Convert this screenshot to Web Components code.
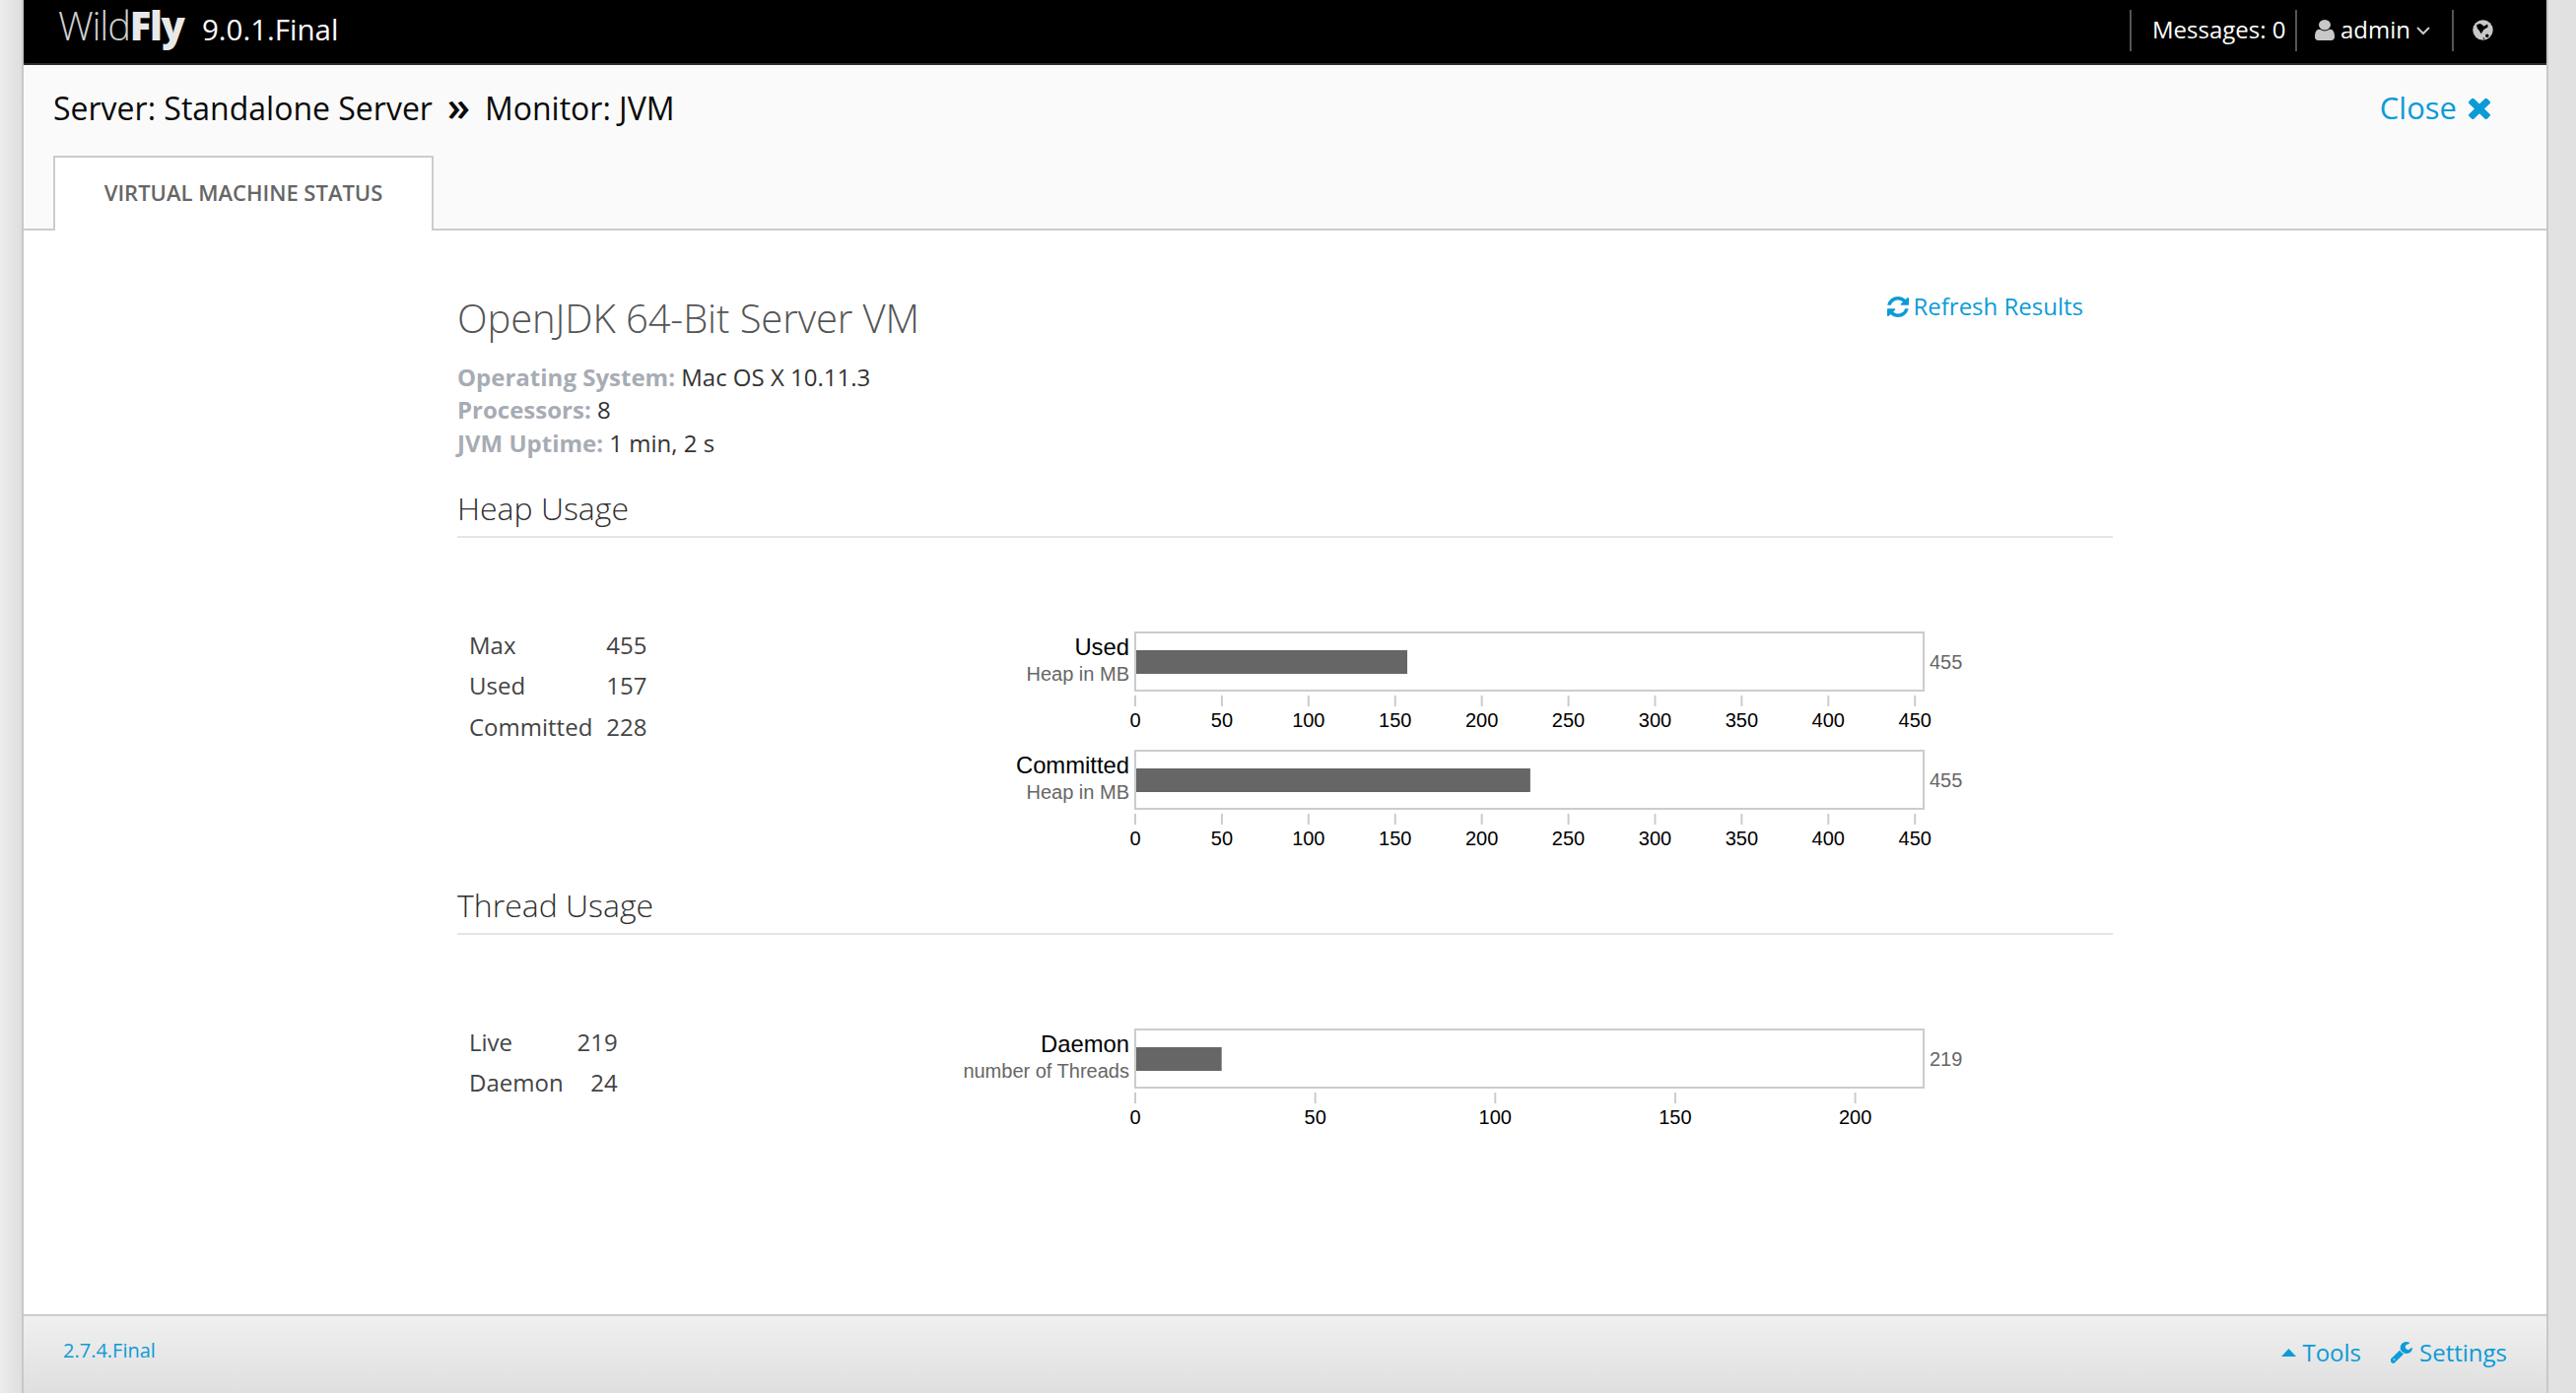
<!DOCTYPE html>
<html><head><meta charset="utf-8"><style>
html,body{margin:0;padding:0;height:100%}
body{font-family:"Open Sans",sans-serif;background:#e2e2e2}
</style></head><body>
<wf-app>
  <wf-topbar version="9.0.1.Final"></wf-topbar>
  <wf-subheader></wf-subheader>
  <wf-status></wf-status>
  <wf-footer></wf-footer>
</wf-app>
<script>
const FA={
times:["110 188 1188 1232","M1298 1188q0 40-28 68l-136 136q-28 28-68 28t-68-28l-294-294-294 294q-28 28-68 28t-68-28l-136-136q-28-28-28-68t28-68l294-294-294-294q-28-28-28-68t28-68l136-136q28-28 68-28t68 28l294 294 294-294q28-28 68-28t68 28l136 136q28 28 28 68t-28 68l-294 294 294 294q28 28 28 68z"],
user:["256 128 1280 1536","M1536 1399q0 109-62.5 187t-150.5 78h-854q-88 0-150.5-78t-62.5-187q0-85 8.5-160.5t31.5-152 58.5-131 94-89 134.5-34.5q131 128 313 128t313-128q76 0 134.5 34.5t94 89 58.5 131 31.5 152 8.5 160.5zm-256-887q0 159-112.5 271.5t-271.5 112.5-271.5-112.5-112.5-271.5 112.5-271.5 271.5-112.5 271.5 112.5 112.5 271.5z"],
refresh:["128 128 1536 1536","M1639 1056q0 5-1 7-64 268-268 434.5t-478 166.5q-146 0-282.5-55t-243.5-157l-129 129q-19 19-45 19t-45-19-19-45v-448q0-26 19-45t45-19h448q26 0 45 19t19 45-19 45l-137 137q71 66 161 102t187 36q134 0 250-65t186-179q11-17 53-117 8-23 30-23h192q13 0 22.5 9.5t9.5 22.5zm25-800v448q0 26-19 45t-45 19h-448q-26 0-45-19t-19-45 19-45l138-138q-148-137-349-137-134 0-250 65t-186 179q-11 17-53 117-8 23-30 23h-199q-13 0-22.5-9.5t-9.5-22.5v-7q65-268 270-434.5t480-166.5q146 0 284 55.5t245 156.5l130-129q19-19 45-19t45 19 19 45z"],
wrench:["136 128 1590 1643","M448 1472q0-26-19-45t-45-19-45 19-19 45 19 45 45 19 45-19 19-45zm644-420l-682 682q-37 37-90 37-52 0-91-37l-106-108q-38-36-38-90 0-53 38-91l681-681q39 98 114.5 173.5t173.5 114.5zm634-435q0 39-23 106-47 134-164.5 217.5t-258.5 83.5q-185 0-316.5-131.5t-131.5-316.5 131.5-316.5 316.5-131.5q58 0 121.5 16.5t107.5 46.5q16 11 16 28t-16 28l-293 169v224l193 107q5-3 79-48.5t135.5-81 70.5-35.5q15 0 23.5 10t8.5 25z"]
};
const icon=(n,w,h,c,extra='')=>`<svg width="${w}" height="${h}" viewBox="${FA[n][0]}" preserveAspectRatio="none" fill="${c}" style="display:block;flex:none;${extra}"><path d="${FA[n][1]}"/></svg>`;

function def(name,css,html){
  customElements.define(name,class extends HTMLElement{
    connectedCallback(){
      if(this.shadowRoot)return;
      const r=this.attachShadow({mode:'open'});
      r.innerHTML=`<style>${css}</style>`+(typeof html==='function'?html(this):html);
    }
  });
}

def('wf-app',`
:host{display:flex;flex-direction:column;box-sizing:border-box;height:1414px;width:2614px;padding:0 30px 0 24px;
 background:linear-gradient(90deg,#ececec 0,#dedede 22px,#c8c8c8 22px,#c8c8c8 24px,#c8c8c8 2586px,#e2e2e2 2586px,#e0e0e0 100%)}
`,`<slot></slot>`);

def('wf-topbar',`
:host{display:flex;align-items:center;height:66px;box-sizing:border-box;background:#000;border-bottom:2px solid #2b2b2b;color:#fff;padding:0 0 0 35px}
.logo{font-family:"Open Sans";font-size:40px;line-height:52px;padding-bottom:12px;color:#cfcfcf;font-weight:300;letter-spacing:-1.2px;width:146px;white-space:nowrap}
.logo b{font-family:"Open Sans";font-weight:800;color:#e8e8e8;letter-spacing:-1.4px}
.ver{font-size:29.5px;line-height:59px;padding-bottom:5px}
.right{margin-left:auto;display:flex;align-items:center;height:42px;font-size:24px;margin-bottom:2px}
.item{display:flex;align-items:center;height:42px;box-sizing:border-box;border-left:2px solid #555;padding-bottom:4px}
.msg{padding-left:21px;width:168px}
.adm{padding-left:18px;width:159px;gap:6px}
.glob{padding-left:19px;width:96px;padding-bottom:1px}
`,`<div class="logo">Wild<b>Fly</b></div><div class="ver">9.0.1.Final</div>
<div class="right">
<div class="item msg">Messages: 0</div>
<div class="item adm">${icon('user',20,21,'#c8c8c8','margin-top:3px')}<span>admin</span><svg width="14" height="9" viewBox="0 0 14 9" fill="none" stroke="#c8c8c8" stroke-width="2" style="margin-top:4px"><path d="M1 1l6 6 6-6"/></svg></div>
<div class="item glob"><svg width="21" height="21" viewBox="0 0 21 21"><circle cx="10.500" cy="10.500" r="10.200" fill="#c8c8c8"/><path d="M4 5.200L7.500 4l2.300 1 1.500 1.700L15.200 4.500l.5 3-4.200 2.400-2.800 4.300L6.800 11 4.800 8.800z" fill="#000"/><circle cx="14.800" cy="16.300" r="1.700" fill="#000"/><circle cx="11.500" cy="19" r=".8" fill="#000"/></svg></div>
</div>`);

def('wf-subheader',`
:host{display:block;height:168px;box-sizing:border-box;background:#fafafa;border-bottom:2px solid #ccc;padding:0 0 0 30px}
.row{display:flex;align-items:flex-start;height:92px;box-sizing:border-box;padding:20px 57px 0 0}
.crumb{font-size:32px;line-height:44px;color:#0a0a0a;display:flex;white-space:nowrap;margin-top:2px}
.sep{width:53px;text-align:center;font-size:42px;line-height:38px;font-weight:600}
.close{margin-left:auto;display:flex;align-items:center;gap:12px;font-size:31px;line-height:44px;color:#0b9bd7;margin-top:1px}
.tabs{display:flex}
wf-tab{margin-bottom:-2px}
`,`<div class="row"><div class="crumb"><span>Server: Standalone Server</span><span class="sep">»</span><span>Monitor: JVM</span></div>
<div class="close"><span>Close</span>${icon('times',22,22,'#0b9bd7','margin-top:2px')}</div></div>
<div class="tabs"><wf-tab>Virtual Machine Status</wf-tab></div>`);

def('wf-tab',`
:host{display:block;box-sizing:border-box;width:386px;height:76px;background:#fff;border:2px solid #ccc;border-bottom:0;color:#666;font-size:22px;font-weight:600;text-transform:uppercase;text-align:center;line-height:70px;white-space:nowrap}
`,`<slot></slot>`);

def('wf-status',`
:host{display:block;flex:1;background:#fff;box-sizing:border-box;padding:64px 0 0 440px;min-height:0}
.wrap{width:1680px}
.head{display:flex;justify-content:space-between}
h1{margin:0;font-size:40px;font-weight:300;line-height:50px;color:#555;letter-spacing:-.1px}
.refresh{display:flex;align-items:center;gap:4px;color:#0b9bd7;font-size:24px;line-height:34px;height:34px;margin:-4px 30px 0 0}
dl{margin:18px 0 0;font-size:24px;line-height:33.33px;color:#333}
dl div{display:block;white-space:nowrap}
dt{display:inline;font-weight:700;color:#a7acb4}
dd{display:inline;margin:0}
`,`<div class="wrap">
<div class="head"><h1>OpenJDK 64-Bit Server VM</h1><div class="refresh">${icon('refresh',22,21,'#0b9bd7')}<span>Refresh Results</span></div></div>
<dl><div><dt>Operating System:</dt> <dd>Mac OS X 10.11.3</dd></div><div><dt>Processors:</dt> <dd>8</dd></div><div><dt>JVM Uptime:</dt> <dd>1 min, 2 s</dd></div></dl>
<wf-section heading="Heap Usage" style="margin-top:30px">
  <wf-metrics slot="metrics" data='[["Max",455],["Used",157],["Committed",228]]'></wf-metrics>
  <wf-bullet title-text="Used" sub="Heap in MB" value="157" max="455" step="50" ticks="10"></wf-bullet>
  <wf-bullet title-text="Committed" sub="Heap in MB" value="228" max="455" step="50" ticks="10"></wf-bullet>
</wf-section>
<wf-section heading="Thread Usage" style="margin-top:37px">
  <wf-metrics slot="metrics" data='[["Live",219],["Daemon",24]]'></wf-metrics>
  <wf-bullet title-text="Daemon" sub="number of Threads" value="24" max="219" step="50" ticks="5"></wf-bullet>
</wf-section>
</div>`);

def('wf-section',`
:host{display:block}
h2{margin:0;font-size:32px;line-height:40px;font-weight:300;color:#2e2e2e;padding-bottom:8px;border-bottom:2px solid #e5e5e5}
.body{display:grid;grid-template-columns:476px 1fr;padding-top:76px}
.charts{display:flex;flex-direction:column}
.m{padding-top:12px}
`,(h)=>`<h2>${h.getAttribute('heading')}</h2><div class="body"><div class="m"><slot name="metrics"></slot></div><div class="charts"><slot></slot></div></div>`);

def('wf-metrics',`
:host{display:grid;grid-template-columns:auto auto;justify-content:start;column-gap:14px;padding-left:12px;font-size:24px;line-height:41.5px;color:#444}
.v{text-align:right}
`,(h)=>JSON.parse(h.getAttribute('data')).map(([k,v])=>`<span>${k}</span><span class="v">${v}</span>`).join(''));

def('wf-bullet',`
:host{display:block;width:1100px;height:120px}
svg{display:block;overflow:visible}
text{font-family:"Liberation Sans",Arial,sans-serif}
`,(h)=>{
  const val=+h.getAttribute('value'),max=+h.getAttribute('max'),step=+h.getAttribute('step'),n=+h.getAttribute('ticks');
  const X=212,W=800,k=W/max;
  let t='';
  for(let i=0;i<n;i++){const x=X+i*step*k;
    t+=`<line x1="${x}" x2="${x}" y1="84" y2="95" stroke="#ccc" stroke-width="2"/><text x="${x}" y="116" text-anchor="middle" font-size="20" fill="#000">${i*step}</text>`;}
  return `<svg width="1100" height="120" viewBox="0 0 1100 120">
  <rect x="${X}" y="20" width="${W}" height="59" fill="#fff" stroke="#ccc" stroke-width="2"/>
  <rect x="${X+1}" y="38" width="${val*k-1}" height="24" fill="#666"/>
  ${t}
  <text x="${X-6}" y="43" text-anchor="end" font-size="23.8" fill="#000">${h.getAttribute('title-text')}</text>
  <text x="${X-6}" y="69" text-anchor="end" font-size="20" fill="#666">${h.getAttribute('sub')}</text>
  <text x="${X+W+6}" y="57" font-size="20" fill="#666">${max}</text>
  </svg>`;
});

def('wf-footer',`
:host{display:flex;align-items:center;height:80px;box-sizing:border-box;border-top:2px solid #ccc;background:linear-gradient(#f0f0f0,#dfdfdf);padding:0 40px;color:#0b9bd7}
.ver{font-size:20px;line-height:28px;margin-top:-9px}
.r{margin-left:auto;display:flex;gap:30px;font-size:24px;line-height:34px;margin-top:-5px}
.l{display:flex;align-items:center}
`,`<div class="ver">2.7.4.Final</div>
<div class="r"><div class="l" style="gap:6px"><svg width="15" height="8" viewBox="0 0 15 8" fill="#0b9bd7" style="margin-top:1px"><path d="M7.500 0L15 8H0z"/></svg><span>Tools</span></div>
<div class="l" style="gap:7px">${icon('wrench',22,22,'#0b9bd7')}<span>Settings</span></div></div>`);
</script>
</body></html>
